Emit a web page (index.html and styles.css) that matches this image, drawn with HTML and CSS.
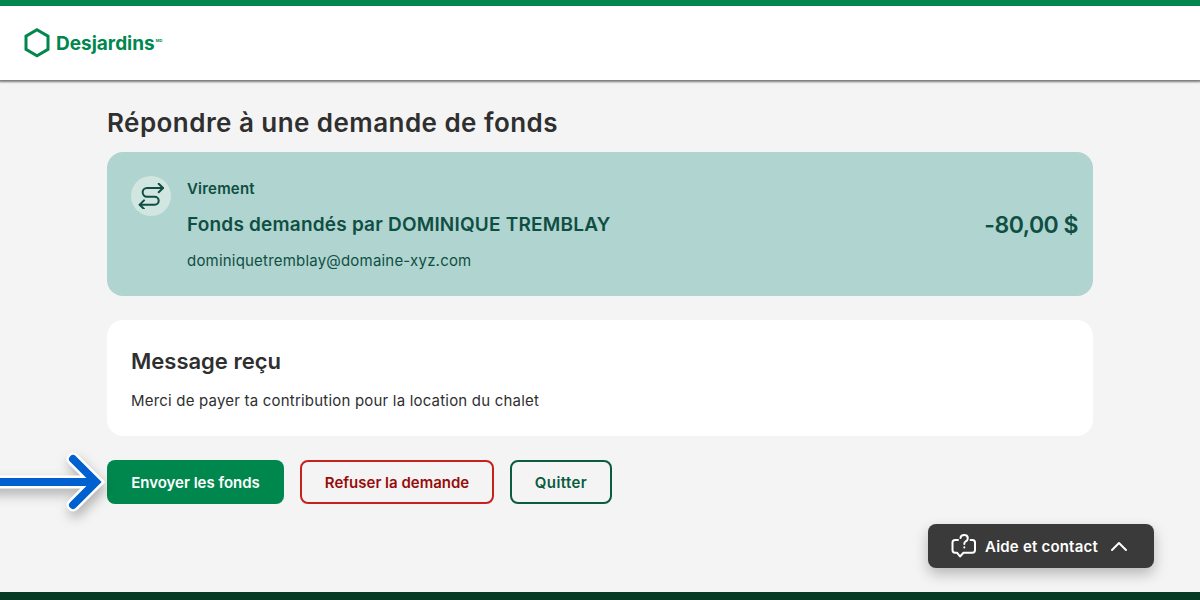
FILE: index.html
```html
<!DOCTYPE html>
<html lang="fr">
<head>
<meta charset="utf-8">
<title>Répondre à une demande de fonds</title>
<link rel="stylesheet" href="styles.css">
</head>
<body>
<header class="header">
  <div class="logo">
    <svg class="logo-mark" width="26" height="30" viewBox="0 0 26 30"><path d="M13 1.8 L24 8.1 V21.4 L13 27.7 L2 21.4 V8.1 Z" fill="none" stroke="#00874e" stroke-width="3" stroke-linejoin="miter"/></svg>
    <span class="logo-text">Desjardins</span><span class="logo-md">MD</span>
  </div>
</header>
<main class="main">
  <h1 class="title">Répondre à une demande de fonds</h1>
  <section class="summary">
    <div class="summary-icon">
      <svg width="26" height="26" viewBox="0 0 26 26" fill="none" stroke="#0f4f43" stroke-width="2" stroke-linecap="round" stroke-linejoin="round"><path d="M25 5 H9 a4.35 4.35 0 0 0 0 8.7 H16.7 a4 4 0 0 1 0 8 H1.7"/><path d="M20.7 .7 L25 5 L20.7 9.3"/><path d="M6 17.4 L1.7 21.7 L6 26"/></svg>
    </div>
    <div class="summary-body">
      <div class="summary-kicker">Virement</div>
      <div class="summary-title">Fonds demandés par DOMINIQUE TREMBLAY</div>
      <div class="summary-mail">dominiquetremblay@domaine-xyz.com</div>
    </div>
    <div class="summary-amount">-80,00 $</div>
  </section>
  <section class="message">
    <h2 class="message-title">Message reçu</h2>
    <p class="message-text">Merci de payer ta contribution pour la location du chalet</p>
  </section>
  <div class="actions">
    <button class="btn btn-primary">Envoyer les fonds</button>
    <button class="btn btn-danger">Refuser la demande</button>
    <button class="btn btn-ghost">Quitter</button>
  </div>
</main>
<svg class="arrow" width="112" height="70" viewBox="0 0 112 70" fill="none" stroke-linecap="round" stroke-linejoin="miter"><path d="M-10 35 H94 M73 12 L96 35 L73 58" stroke="#fff" stroke-width="13"/><path d="M-10 35 H94 M73 12 L96 35 L73 58" stroke="#0060cf" stroke-width="8"/></svg>
<button class="help">
  <svg class="help-icon" width="26" height="26" viewBox="0 0 26 26" fill="none" stroke="#fff" stroke-width="2" stroke-linecap="round" stroke-linejoin="round"><path d="M7 7 H4 Q1.5 7 1.5 9.5 V17 Q1.5 19.7 4 19.7 H6 L9 23.5 L12.5 19.7 H21.5 Q24 19.7 24 17 V9.5 Q24 7 21.5 7 H19.5"/><path d="M9.5 5 Q9.7 2 13.2 2 Q16.8 2 16.8 5.2 Q16.8 7.5 14.5 8.5 Q13.3 9.2 13.3 11"/><path d="M13.3 14.3 V14.5"/></svg>
  <span class="help-label">Aide et contact</span>
  <svg width="18" height="12" viewBox="0 0 18 12" fill="none" stroke="#fff" stroke-width="2" stroke-linecap="round" stroke-linejoin="round"><path d="M2 10 L9 3 L16 10"/></svg>
</button>
<footer class="footer"></footer>
</body>
</html>
```
FILE: styles.css
```css
* { box-sizing: border-box; }
html, body { margin: 0; height: 600px; overflow: hidden; }
body {
  background: #f4f4f4;
  color: #2f2f2f;
  font-family: "Inter", "Liberation Sans", sans-serif;
  position: relative;
  display: flex;
  flex-direction: column;
}
.header {
  height: 80px;
  background: #fff;
  border-top: 6px solid #00874e;
  box-shadow: 0 1px 2px 1px rgba(0,0,0,.5);
  display: flex;
  align-items: center;
  padding: 0 0 0 24px;
  flex: none;
}
.logo { display: flex; align-items: center; color: #00874e; }
.logo-mark { display: block; margin-right: 6px; }
.logo-text { font-size: 19px; font-weight: 700; }
.logo-md { font-size: 4px; font-weight: 700; margin: -6px 0 0 1px; }
.main { width: 986px; margin: 0 auto; flex: 1; }
.title { font-size: 26px; line-height: 32px; font-weight: 600; letter-spacing: .45px; margin: 27px 0 13px; color: #2f2f2f; }
.summary {
  height: 144px;
  background: #b0d4cf;
  border-radius: 16px;
  color: #0f4f43;
  display: flex;
  padding: 24px 15px 0 24px;
}
.summary-icon {
  width: 40px; height: 40px;
  border-radius: 50%;
  background: #d1e6e0;
  display: flex; align-items: center; justify-content: center;
  flex: none;
}
.summary-body { flex: 1; margin-left: 16px; padding-top: 1px; }
.summary-kicker { font-size: 15px; line-height: 24px; font-weight: 600; letter-spacing: .2px; }
.summary-title { font-size: 19px; line-height: 24px; font-weight: 600; letter-spacing: .2px; margin-top: 12px; }
.summary-mail { font-size: 15px; line-height: 24px; letter-spacing: .2px; margin-top: 12px; }
.summary-amount { font-size: 23px; line-height: 30px; font-weight: 600; letter-spacing: -.5px; margin-top: 34px; }
.message {
  height: 116px;
  margin-top: 24px;
  background: #fff;
  border-radius: 16px;
  padding: 26px 24px 0;
}
.message-title { font-size: 22px; line-height: 30px; font-weight: 600; margin: 0; }
.message-text { font-size: 15px; line-height: 24px; letter-spacing: .2px; margin: 13px 0 0; }
.actions { display: flex; gap: 16px; margin-top: 24px; }
.btn {
  height: 44px;
  border-radius: 8px;
  font: 600 15px "Inter", "Liberation Sans", sans-serif;
  background: transparent;
  padding: 0;
}
.btn-primary { width: 177px; background: #00874e; border: 0; color: #fff; }
.btn-danger { width: 194px; border: 2px solid #c8201e; color: #960d0b; }
.btn-ghost { width: 102px; border: 2px solid #0b5c3f; color: #0b5c3f; letter-spacing: .4px; }
.arrow {
  position: absolute; left: 0; top: 447px;
  filter: drop-shadow(2px 6px 6px rgba(0,0,0,.28));
  overflow: visible;
}
.help {
  position: absolute; left: 928px; top: 524px;
  width: 226px; height: 44px;
  background: #3a3a3a;
  border: 0; border-radius: 8px;
  box-shadow: 0 6px 14px rgba(0,0,0,.25);
  color: #fff;
  display: flex; align-items: center;
  padding: 0 0 0 23px;
  font: 600 15px "Inter", "Liberation Sans", sans-serif;
  letter-spacing: .2px;
}
.help-icon { margin-top: -1px; }
.help-label { margin: 0 12px 0 8px; }
.footer { height: 8px; background: #063a25; flex: none; }
```
